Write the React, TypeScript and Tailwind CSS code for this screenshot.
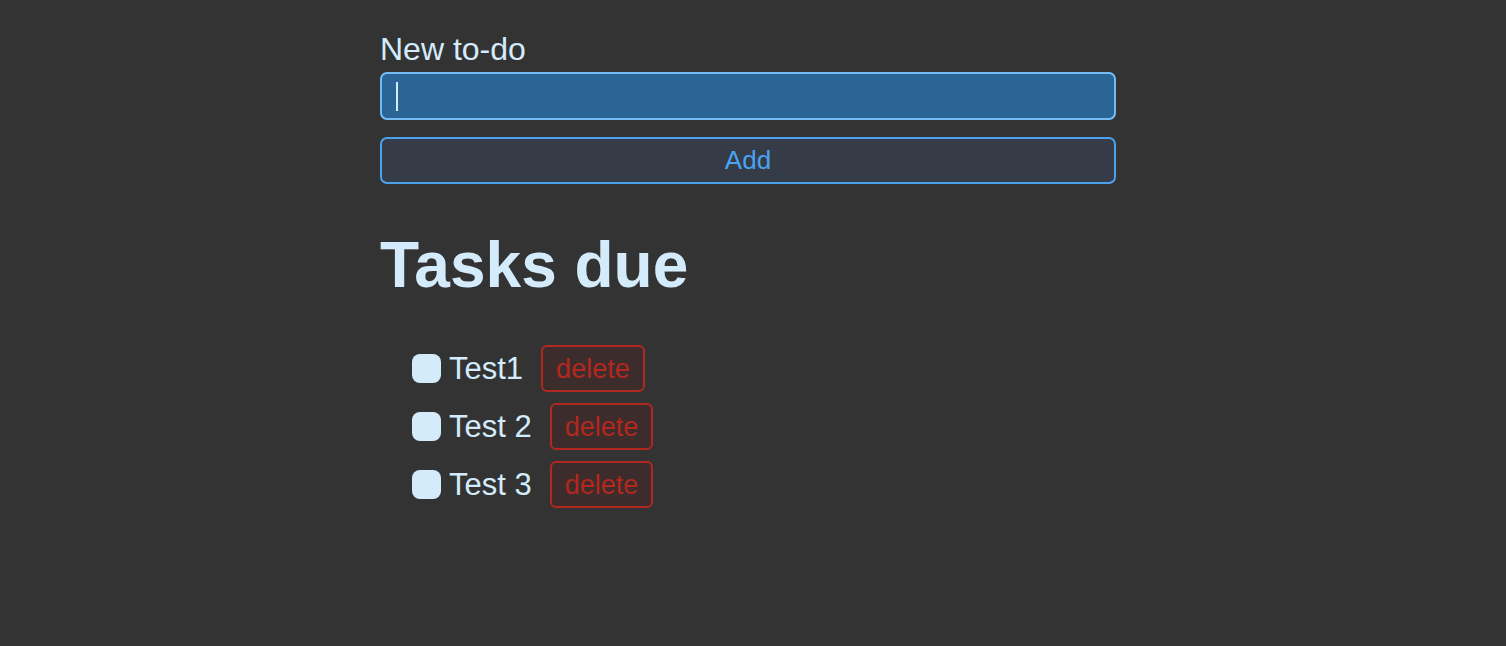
const tasks = ["Test1", "Test 2", "Test 3"]

const App = () => {
	return (
		<div className="min-h-[646px] bg-[#333333] pt-[32px] font-['Liberation_Sans',Arial,sans-serif] text-[#d4ebfc]">
			<div className="ml-[380px] w-[736px]">
				<label className="block text-[32px] leading-[35px]">New to-do</label>
				<div className="mt-[5px] flex h-[48px] items-center rounded-[7px] border-2 border-[#74bdf4] bg-[#2a6596] px-[14px]">
					<span className="h-[29px] w-[2px] bg-[#d4ebfc]" />
				</div>
				<button className="mt-[17px] flex h-[47px] w-full items-center justify-center rounded-[7px] border-2 border-[#4aa1ec] bg-[#363c47] text-[26px] text-[#4aa3f0]">
					Add
				</button>

				<h1 className="mt-[44px] text-[64px] font-bold leading-[74px]">Tasks due</h1>

				<ul className="mt-[43px] flex flex-col gap-[11px] pl-[32px]">
					{tasks.map((t) => (
						<li key={t} className="flex h-[47px] items-center">
							<span className="size-[29px] rounded-[8px] bg-[#d4ebfc]" />
							<span className="ml-[8px] pt-[2px] text-[31px]">{t}</span>
							<button className="ml-[18px] flex h-[47px] items-center rounded-[6px] border-2 border-[#b0281f] bg-[#3c2c2c] px-[13px] pt-[2px] text-[27px] text-[#b3271f]">
								delete
							</button>
						</li>
					))}
				</ul>
			</div>
		</div>
	)
}

export default App
